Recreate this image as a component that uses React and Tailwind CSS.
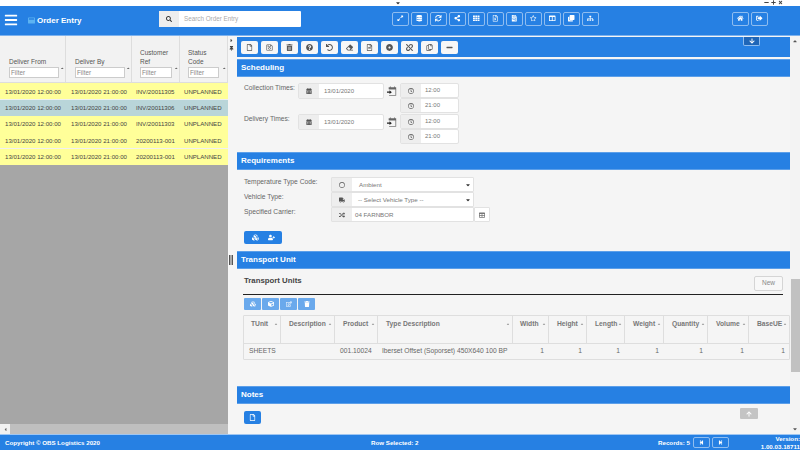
import React from "react";
import {
  FaExpandAlt, FaDatabase, FaSync, FaShareAlt, FaTh, FaRegFileExcel, FaRegFileAlt, FaRegStar, FaColumns, FaClone, FaSitemap,
  FaHome, FaSignOutAlt, FaRegFile, FaRegSave, FaTrashAlt, FaQuestionCircle, FaUndo, FaEraser, FaDotCircle, FaUnlink, FaRegCopy, FaMinus,
  FaCalendarAlt, FaRegClock, FaRegCircle, FaTruck, FaRandom, FaTable, FaCubes, FaUserPlus, FaCube, FaRegEdit, FaTrash, FaArrowDown, FaArrowUp,
  FaStepBackward, FaStepForward, FaSearch, FaBars, FaCaretDown, FaCaretUp, FaCaretLeft, FaCaretRight, FaThumbtack, FaPlus, FaTimes, FaWindowMaximize, FaFileInvoice,
} from "react-icons/fa";

const rows = [
  ["INV/20011305", false],
  ["INV/20011306", true],
  ["INV/20011303", false],
  ["20200113-001", false],
  ["20200113-001", false],
];

const topIcons = [FaExpandAlt, FaDatabase, FaSync, FaShareAlt, FaTh, FaRegFileExcel, FaFileInvoice, FaRegStar, FaColumns, FaClone, FaSitemap];
const toolIcons = [FaRegFile, FaRegSave, FaTrashAlt, FaQuestionCircle, FaUndo, FaEraser, FaRegFileAlt, FaDotCircle, FaUnlink, FaRegCopy, FaMinus];

const columns = [
  ["TUnit", "w-[37px]", "pl-[7px]"],
  ["Description", "w-[54px]", "pl-[8px]"],
  ["Product", "w-[43px]", "pl-[8px]"],
  ["Type Description", "w-[135px]", "pl-[8px]"],
  ["Width", "w-[36px]", "pl-[7px]"],
  ["Height", "w-[38px]", "pl-[8px]"],
  ["Length", "w-[38px]", "pl-[8px]"],
  ["Weight", "w-[39px]", "pl-[8px]"],
  ["Quantity", "w-[44px]", "pl-[8px]"],
  ["Volume", "w-[41px]", "pl-[8px]"],
  ["BaseUE", "w-[41px]", "pl-[8px]"],
];

const leftHeads = [
  ["Deliver From", "w-[50px] ml-[9px]", "ml-[9px] w-[50px]"],
  ["Deliver By", "w-[50px] ml-[9px]", "ml-[9px] w-[50px]"],
  ["Customer Ref", "w-[32px] ml-[8px]", "ml-[8px] w-[30px]"],
  ["Status Code", "w-[31px] ml-[8px]", "ml-[8px] w-[30px]"],
];

function HeadBtn({ Icon }) {
  return (
    <div className="w-[17px] h-[14px] rounded-[2px] border border-[#8fbdf0] flex items-center justify-center text-white text-[6.5px]">
      <Icon />
    </div>
  );
}

function ToolBtn({ Icon }) {
  return (
    <div className="w-[17px] h-[13px] rounded-[2px] bg-[#f7f7f7] flex items-center justify-center text-[#555] text-[7px]">
      <Icon />
    </div>
  );
}

function Section({ title, className }) {
  return (
    <div className={`bg-[#2680e3] border-y border-[#5c9fe9] flex items-center pl-[4px] text-white font-bold text-[8px] ${className}`}>
      {title}
    </div>
  );
}

function Addon({ Icon }) {
  return (
    <div className="w-[20px] h-full bg-[#eeeeee] flex items-center justify-center text-[#555] text-[6px] shrink-0">
      <Icon />
    </div>
  );
}

function CalSwap() {
  return (
    <div className="w-[16px] flex items-center justify-center">
      <svg viewBox="0 0 12 12" className="w-[10px] h-[10px]">
        <path d="M2.5 3.5h8v8h-8" fill="none" stroke="#777" strokeWidth="1" />
        <path d="M2 1.5h9v2.4H2z" fill="#666" />
        <path d="M3.5 0.5h1v1.5h-1zM8.5 0.5h1v1.5h-1z" fill="#666" />
        <path d="M0 6.6h3V5.2l2.8 2.2L3 9.6V8.2H0z" fill="#222" />
      </svg>
    </div>
  );
}

function DateField({ label, value }) {
  return (
    <div className="flex h-[16px] items-stretch">
      <span className="w-[54px] text-[6.7px] text-[#666] leading-[10px] whitespace-nowrap">{label}</span>
      <div className="w-[86px] flex rounded-[2px] border border-[#e2e2e2] bg-white">
        <Addon Icon={FaCalendarAlt} />
        <span className="pl-[5px] flex items-center text-[6px] text-[#777]">{value}</span>
      </div>
      <CalSwap />
    </div>
  );
}

function TimeField({ value }) {
  return (
    <div className="w-[59px] h-[15px] flex rounded-[2px] border border-[#e2e2e2] bg-white">
      <Addon Icon={FaRegClock} />
      <span className="pl-[4px] flex items-center text-[6px] text-[#777]">{value}</span>
    </div>
  );
}

function FormRow({ label, Icon, value, select, extra, indent }) {
  return (
    <div className="flex h-[15px] items-stretch">
      <span className="w-[87px] text-[6.7px] text-[#666] leading-[9px] whitespace-nowrap">{label}</span>
      <div className="w-[143px] flex rounded-[1px] border border-[#e2e2e2] bg-white">
        <Addon Icon={Icon} />
        <span className={`${indent} flex-1 flex items-center justify-between text-[6.2px] text-[#777]`}>
          {value}
          {select && <FaCaretDown className="text-[#333] text-[6px] mr-[2px]" />}
        </span>
      </div>
      {extra && (
        <div className="w-[16px] bg-white border border-[#e2e2e2] rounded-[1px] flex items-center justify-center text-[#777] text-[6px]">
          <FaTable />
        </div>
      )}
    </div>
  );
}

export default function App() {
  return (
    <div className="w-[800px] h-[450px] overflow-hidden bg-white flex flex-col" style={{ fontFamily: '"Liberation Sans", Arial, sans-serif' }}>
      {/* top strip */}
      <div className="h-[6px] relative bg-white shrink-0">
        <FaCaretDown className="absolute left-[395px] top-[0px] text-[#333] text-[6px]" />
        <div className="absolute left-[764px] top-[0px] flex gap-[2px] text-[#444] text-[5px]">
          <FaMinus />
          <FaPlus />
          <FaTimes />
        </div>
      </div>

      {/* header */}
      <div className="h-[30px] shrink-0 bg-[#2680e3] border-b border-[#7db2ee] flex items-center">
        <FaBars className="ml-[4px] text-white text-[14px] w-[14px] mb-[2px]" />
        <FaWindowMaximize className="ml-[10px] text-[#5cb3f2] text-[7px]" />
        <span className="ml-[2px] text-white font-bold text-[8px] w-[30px] whitespace-nowrap">Order Entry</span>
        <div className="ml-[92px] w-[142px] h-[16px] mb-[3px] flex bg-white rounded-[1px]">
          <div className="w-[20px] bg-[#eeeeee] flex items-center justify-center text-[#333] text-[6px]"><FaSearch /></div>
          <span className="pl-[5px] flex items-center text-[6.3px] text-[#aaa]">Search Order Entry</span>
        </div>
        <div className="ml-[91px] flex gap-[2px] mb-[4px]">
          {topIcons.map((I, i) => <HeadBtn key={i} Icon={I} />)}
        </div>
        <div className="ml-[133px] flex gap-[2px] mb-[4px]">
          <HeadBtn Icon={FaHome} />
          <HeadBtn Icon={FaSignOutAlt} />
        </div>
      </div>

      {/* main */}
      <div className="flex-1 flex min-h-0">
        {/* left */}
        <div className="w-[228px] shrink-0 flex flex-col bg-[#a6a6a6]">
          <div className="h-[47px] shrink-0 bg-[#f2f2f2] border-b border-[#dddddd] grid grid-cols-[66px_66px_48px_48px] text-[6.5px] text-[#555]">
            {leftHeads.map(([t, f, m]) => (
              <div key={t} className="relative flex flex-col justify-end pb-[4px] border-r border-[#dddddd]">
                <div className={`${m} leading-[9px]`}>{t}</div>
                <div className={`${f} h-[11px] mt-[1px] bg-white border border-[#cccccc] text-[#888] text-[6.3px] pl-[1px] flex items-center`}>Filter</div>
                <FaCaretUp className="absolute right-[1px] bottom-[12px] text-[#666] text-[4.5px]" />
              </div>
            ))}
          </div>
          <div className="flex flex-col gap-[0.35px] mt-[0.3px] bg-[#f0f0f0]">
            {rows.map(([ref, sel], i) => (
              <div key={i} className={`h-[16px] grid grid-cols-[66px_66px_48px_48px] items-center text-[6.1px] text-[#444] ${sel ? "bg-[#b9d5d9]" : "bg-[#ffff99]"}`}>
                <span className="pl-[5px]">13/01/2020 12:00:00</span>
                <span className="pl-[5px]">13/01/2020 21:00:00</span>
                <span className="pl-[4px]">{ref}</span>
                <span className="pl-[4px]">UNPLANNED</span>
              </div>
            ))}
          </div>
          <div className="flex-1" />
          <div className="h-[10px] shrink-0 bg-[#f1f1f1] flex">
            <div className="w-[10px] flex items-center justify-center text-[#666] text-[5px]"><FaCaretLeft /></div>
            <div className="flex-1 bg-[#bfbfbf]" />
          </div>
        </div>

        {/* splitter */}
        <div className="w-[9px] shrink-0 bg-[#f5f5f5] relative text-[#444] text-[5px]">
          <FaCaretRight className="absolute left-[1px] top-[2px]" />
          <FaThumbtack className="absolute left-[1px] top-[10px]" />
          <div className="absolute left-[1px] top-[219px] w-[4px] h-[10px] border-x border-[#555] bg-[#aaa]" />
        </div>

        {/* right */}
        <div className="flex-1 min-w-0 flex bg-[#f5f5f5]">
          <div className="w-[553px] shrink-0 relative flex flex-col">
            <div className="h-[20px] mt-[1px] bg-[#2680e3] flex items-center pl-[4px] gap-[3px] shrink-0">
              {toolIcons.map((I, i) => <ToolBtn key={i} Icon={I} />)}
            </div>
            <div className="absolute left-[506px] top-[1px] w-[17px] h-[9px] bg-[#1f66b8] border border-[#8fbdf0] border-t-0 rounded-b-[2px] flex items-center justify-center text-white text-[6px]">
              <FaArrowDown />
            </div>

            <Section title="Scheduling" className="h-[18px] mt-[2px] shrink-0" />
            <div className="h-[75px] shrink-0 pl-[7px] pt-[6px] flex">
              <div className="flex flex-col">
                <DateField label="Collection Times:" value="13/01/2020" />
                <div className="h-[15px]" />
                <DateField label="Delivery Times:" value="13/01/2020" />
              </div>
              <div className="flex flex-col">
                <TimeField value="12:00" />
                <TimeField value="21:00" />
                <div className="h-[1px]" />
                <TimeField value="12:00" />
                <TimeField value="21:00" />
              </div>
            </div>

            <Section title="Requirements" className="h-[18px] shrink-0" />
            <div className="h-[81px] shrink-0 pl-[7px] pt-[7px] flex flex-col">
              <FormRow label="Temperature Type Code:" Icon={FaRegCircle} value="Ambient" select indent="pl-[7px]" />
              <FormRow label="Vehicle Type:" Icon={FaTruck} value="-- Select Vehicle Type --" select indent="pl-[6px]" />
              <FormRow label="Specified Carrier:" Icon={FaRandom} value="04 FARNBOR" extra indent="pl-[3px]" />
              <div className="mt-[9px] w-[38px] h-[13px] rounded-[2px] bg-[#2680e3] flex items-center justify-around px-[3px] text-white text-[7px]">
                <FaCubes />
                <FaUserPlus />
              </div>
            </div>

            <Section title="Transport Unit" className="h-[18px] shrink-0" />
            <div className="h-[117px] shrink-0 pl-[6px] flex flex-col">
              <div className="h-[25.5px] w-[540px] flex items-center justify-between border-b-[1.5px] border-[#222] shrink-0">
                <span className="pl-[1px] mb-[1px] font-bold text-[7.8px] text-[#444]">Transport Units</span>
                <div className="w-[29px] h-[15px] mt-[4px] border border-[#d5d5d5] rounded-[2px] flex items-center justify-center text-[6.5px] text-[#888] bg-[#f8f8f8]">New</div>
              </div>
              <div className="mt-[3px] flex gap-[1px] shrink-0 ml-[1px]">
                {[FaCubes, FaCube, FaRegEdit, FaTrash].map((I, i) => (
                  <div key={i} className="w-[17px] h-[12px] rounded-[1px] bg-[#6aa9ec] flex items-center justify-center text-white text-[6px]"><I /></div>
                ))}
              </div>
              <div className="mt-[5.5px] w-[547px] h-[45px] border border-[#dedede] rounded-[1px] flex flex-col shrink-0 overflow-hidden">
                <div className="h-[28px] flex border-b border-[#dedede] shrink-0">
                  {columns.map(([t, w, p]) => (
                    <div key={t} className={`${w} ${p} shrink-0 border-r border-[#dedede] pt-[3px] text-[6.7px] font-bold text-[#777] flex justify-between pr-[2px] whitespace-nowrap`}>
                      {t}
                      <FaCaretUp className="text-[#888] text-[4px] mt-[3px] shrink-0" />
                    </div>
                  ))}
                </div>
                <div className="flex-1 flex items-center text-[6.7px] text-[#666]">
                  {columns.map(([t, w], i) => (
                    <div key={t} className={`${w} shrink-0 ${i === 3 ? "px-[4px]" : "px-[5px]"} whitespace-nowrap ${i >= 4 ? "text-right" : ""}`}>
                      {i === 0 ? "SHEETS" : i === 2 ? "001.10024" : i === 3 ? "Iberset Offset (Soporset) 450X640 100 BP" : i >= 4 ? "1" : ""}
                    </div>
                  ))}
                </div>
              </div>
            </div>

            <Section title="Notes" className="h-[18px] shrink-0" />
            <div className="pl-[7px] pt-[7px] flex-1 relative">
              <div className="w-[17px] h-[13px] rounded-[2px] bg-[#2680e3] flex items-center justify-center text-white text-[7px]"><FaRegFile /></div>
              <div className="absolute left-[503px] top-[4px] w-[18px] h-[11px] rounded-[1px] bg-[#c4c4c4] flex items-center justify-center text-white text-[6px]"><FaArrowUp /></div>
            </div>
          </div>

          {/* scrollbar */}
          <div className="w-[10px] shrink-0 bg-[#f3f3f3] flex flex-col text-[#555] text-[6px]">
            <div className="h-[10px] flex items-center justify-center"><FaCaretUp /></div>
            <div className="h-[233px]" />
            <div className="h-[93px] ml-[1px] bg-[#c1c1c1]" />
            <div className="flex-1" />
            <div className="h-[10px] flex items-center justify-center"><FaCaretDown /></div>
          </div>
        </div>
      </div>

      {/* footer */}
      <div className="h-[16px] shrink-0 bg-[#2680e3] border-t border-[#9fc6f2] flex items-center text-white font-bold text-[6.2px] relative">
        <span className="ml-[5px] w-[366px]">Copyright © OBS Logistics 2020</span>
        <span className="w-[287px]">Row Selected: 2</span>
        <span className="w-[35px]">Records: 5</span>
        <div className="flex gap-[2px]">
          <div className="w-[17px] h-[11px] border border-[#8fbdf0] rounded-[2px] flex items-center justify-center text-[5px]"><FaStepBackward /></div>
          <div className="w-[17px] h-[11px] border border-[#8fbdf0] rounded-[2px] flex items-center justify-center text-[5px]"><FaStepForward /></div>
        </div>
        <div className="absolute right-0 top-0 text-right leading-[7.5px] w-[50px]">
          Version:<br />1.00.03.18711
        </div>
      </div>
    </div>
  );
}
